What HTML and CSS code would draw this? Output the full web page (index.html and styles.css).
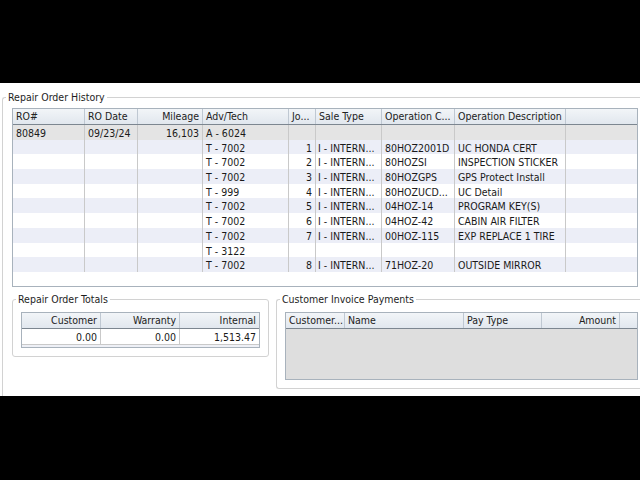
FILE: index.html
```html
<!DOCTYPE html>
<html lang="en">
<head>
<meta charset="utf-8">
<title>Repair Order History</title>
<link rel="stylesheet" href="styles.css">
</head>
<body>
<div class="band"></div>
<div class="screen">
  <fieldset class="group outer">
    <legend>Repair Order History</legend>
    <div class="outer-body">
      <div class="grid main">
        <div class="row head">
          <div class="cell">RO#</div><div class="cell">RO Date</div><div class="cell r">Mileage</div><div class="cell">Adv/Tech</div><div class="cell">Jo...</div><div class="cell">Sale Type</div><div class="cell">Operation C...</div><div class="cell">Operation Description</div><div class="cell"></div>
        </div>
        <div class="row line sel">
          <div class="cell">80849</div><div class="cell">09/23/24</div><div class="cell r">16,103</div><div class="cell">A - 6024</div><div class="cell r"></div><div class="cell"></div><div class="cell"></div><div class="cell"></div><div class="cell"></div>
        </div>
        <div class="row line alt">
          <div class="cell"></div><div class="cell"></div><div class="cell r"></div><div class="cell">T - 7002</div><div class="cell r">1</div><div class="cell st">I - INTERN...</div><div class="cell">80HOZ2001D</div><div class="cell">UC HONDA CERT</div><div class="cell"></div>
        </div>
        <div class="row line">
          <div class="cell"></div><div class="cell"></div><div class="cell r"></div><div class="cell">T - 7002</div><div class="cell r">2</div><div class="cell st">I - INTERN...</div><div class="cell">80HOZSI</div><div class="cell">INSPECTION STICKER</div><div class="cell"></div>
        </div>
        <div class="row line alt">
          <div class="cell"></div><div class="cell"></div><div class="cell r"></div><div class="cell">T - 7002</div><div class="cell r">3</div><div class="cell st">I - INTERN...</div><div class="cell">80HOZGPS</div><div class="cell">GPS Protect Install</div><div class="cell"></div>
        </div>
        <div class="row line">
          <div class="cell"></div><div class="cell"></div><div class="cell r"></div><div class="cell">T - 999</div><div class="cell r">4</div><div class="cell st">I - INTERN...</div><div class="cell">80HOZUCD...</div><div class="cell">UC Detail</div><div class="cell"></div>
        </div>
        <div class="row line alt">
          <div class="cell"></div><div class="cell"></div><div class="cell r"></div><div class="cell">T - 7002</div><div class="cell r">5</div><div class="cell st">I - INTERN...</div><div class="cell">04HOZ-14</div><div class="cell">PROGRAM KEY(S)</div><div class="cell"></div>
        </div>
        <div class="row line">
          <div class="cell"></div><div class="cell"></div><div class="cell r"></div><div class="cell">T - 7002</div><div class="cell r">6</div><div class="cell st">I - INTERN...</div><div class="cell">04HOZ-42</div><div class="cell">CABIN AIR FILTER</div><div class="cell"></div>
        </div>
        <div class="row line alt">
          <div class="cell"></div><div class="cell"></div><div class="cell r"></div><div class="cell">T - 7002</div><div class="cell r">7</div><div class="cell st">I - INTERN...</div><div class="cell">00HOZ-115</div><div class="cell">EXP REPLACE 1 TIRE</div><div class="cell"></div>
        </div>
        <div class="row line">
          <div class="cell"></div><div class="cell"></div><div class="cell r"></div><div class="cell">T - 3122</div><div class="cell r"></div><div class="cell st"></div><div class="cell"></div><div class="cell"></div><div class="cell"></div>
        </div>
        <div class="row line alt">
          <div class="cell"></div><div class="cell"></div><div class="cell r"></div><div class="cell">T - 7002</div><div class="cell r">8</div><div class="cell st">I - INTERN...</div><div class="cell">71HOZ-20</div><div class="cell">OUTSIDE MIRROR</div><div class="cell"></div>
        </div>
      </div>

      <div class="lower">
        <fieldset class="group totals">
          <legend>Repair Order Totals</legend>
          <div class="group-body">
            <div class="grid totals-grid">
              <div class="row head">
                <div class="cell r">Customer</div><div class="cell r">Warranty</div><div class="cell r">Internal</div>
              </div>
              <div class="row line tot-row">
                <div class="cell r">0.00</div><div class="cell r">0.00</div><div class="cell r">1,513.47</div>
              </div>
              <div class="tot-strip"></div>
            </div>
          </div>
        </fieldset>

        <fieldset class="group payments">
          <legend>Customer Invoice Payments</legend>
          <div class="group-body">
            <div class="grid pay-grid">
              <div class="row head">
                <div class="cell">Customer...</div><div class="cell">Name</div><div class="cell">Pay Type</div><div class="cell r">Amount</div><div class="cell"></div>
              </div>
            </div>
          </div>
        </fieldset>
      </div>
    </div>
  </fieldset>
</div>
</body>
</html>
```

FILE: styles.css
```css
html, body {
  margin: 0;
  padding: 0;
}

body {
  width: 640px;
  height: 480px;
  overflow: hidden;
  background: #000;
  font-family: "DejaVu Sans Condensed", "Liberation Sans", sans-serif;
  font-size: 10.5px;
  color: #1a1a1a;
}

.band {
  height: 83px;
}

.screen {
  height: 313px;
  background: #fff;
  overflow: hidden;
}

.group {
  margin: 0;
  min-width: 0;
  border: 1px solid #d2d2d2;
  border-radius: 3px;
  padding: 6px 0 8px 3px;
}

.group > legend {
  padding: 0 2px;
  line-height: 13px;
  font-size: 10.5px;
  color: #1e1e1e;
}

.outer {
  margin: 8px 0 0 2px;
  padding: 4px 0 20px 3px;
  border-right: none;
  border-bottom: none;
  border-radius: 3px 0 0 0;
}

.outer-body {
  padding-left: 6px;
}

.grid {
  box-sizing: border-box;
  border: 1px solid #a8b2bc;
  background: #fff;
}

.row {
  display: grid;
}

.cell {
  box-sizing: border-box;
  border-right: 1px solid #c9c9c9;
  padding: 0 3px;
  overflow: hidden;
  white-space: nowrap;
}

.cell:last-child {
  border-right: none;
}

.r {
  text-align: right;
}

.st {
  padding-left: 2px;
}

.head {
  height: 16px;
  box-sizing: border-box;
  line-height: 15px;
  background: linear-gradient(#f2f5f8, #e1e7ee);
  border-bottom: 1px solid #7c8690;
  color: #222;
}

.head .cell {
  border-right-color: #bfc8d2;
}

.line {
  height: 14.7px;
}

.line .cell {
  padding-top: 2px;
  line-height: 12.7px;
}

.sel {
  background: #e4e4e4;
}

.alt {
  background: #eceef7;
}

/* main grid */
.main {
  width: 626px;
  height: 179px;
}

.main .row {
  grid-template-columns: 72px 53px 65px 86px 27px 66px 73px 111px 1fr;
}

/* lower panels */
.lower {
  display: flex;
  align-items: flex-start;
  gap: 7px;
  margin-top: 6px;
}

.totals {
  flex: none;
  width: 257px;
  box-sizing: border-box;
}

.payments {
  flex: 1;
  border-right: none;
  border-radius: 3px 0 0 3px;
}

.group-body {
  padding-left: 5px;
}

.totals-grid {
  width: 239px;
}

.totals-grid .row {
  grid-template-columns: repeat(3, 1fr);
}

.tot-row {
  height: 15px;
}

.tot-row .cell {
  line-height: 13px;
}

.tot-strip {
  height: 3px;
  box-sizing: border-box;
  border-top: 1px solid #c9c9c9;
  background: #eef0f6;
}

.pay-grid {
  width: 353px;
  height: 68px;
  background: #dedede;
}

.pay-grid .row {
  grid-template-columns: 59px 119px 78px 78px 1fr;
}
```
